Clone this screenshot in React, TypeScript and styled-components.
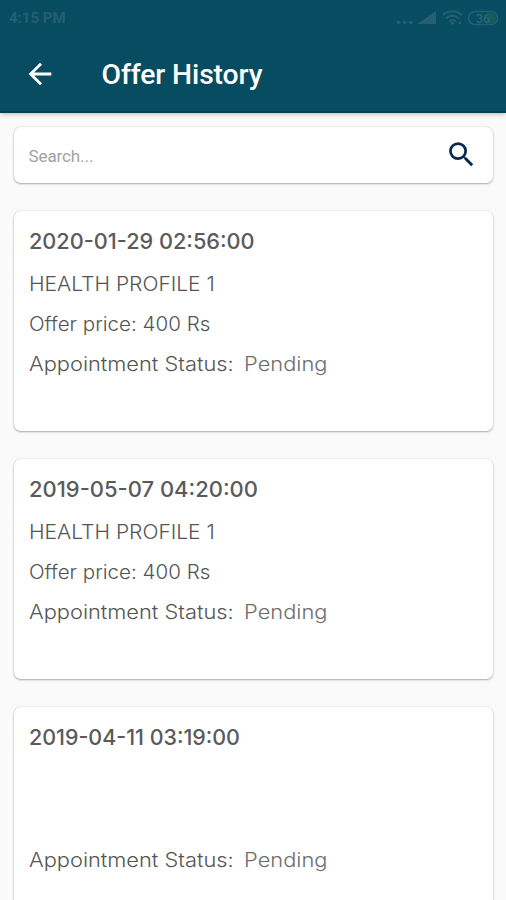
import React from 'react';
import styled, { createGlobalStyle } from 'styled-components';

const GlobalStyle = createGlobalStyle`
  * { box-sizing: border-box; }
  body { margin: 0; background: #fafafa; }
`;

const Screen = styled.div`
  height: 900px;
  overflow: hidden;
  display: flex;
  flex-direction: column;
  background: #fafafa;
  font-family: Roboto, sans-serif;
`;

const Header = styled.header`
  flex: none;
  height: 113px;
  background: #084c61;
  border-bottom: 2px solid #083a5a;
  box-shadow: 0 1px 5px rgba(60, 20, 20, 0.3);
`;

const StatusBar = styled.div`
  height: 36px;
  padding: 0 7px 0 9px;
  display: flex;
  align-items: center;
  justify-content: space-between;
  color: #245f72;
`;

const Clock = styled.span`
  font-size: 15px;
  font-weight: 700;
`;

const TitleBar = styled.div`
  height: 75px;
  padding-left: 23px;
  display: flex;
  align-items: center;
  gap: 44.5px;
`;

const IconButton = styled.button`
  flex: none;
  padding: 0;
  border: 0;
  background: none;
  display: flex;
`;

const Title = styled.h1`
  margin: 3px 0 0;
  font-size: 28.3px;
  line-height: 32px;
  font-weight: 500;
  letter-spacing: -0.12px;
  color: #fff;
`;

const Content = styled.main`
  padding: 14px 13px 0 14px;
  display: flex;
  flex-direction: column;
  gap: 28px;
`;

const Panel = styled.section`
  flex: none;
  background: #fff;
  border-radius: 7px;
  box-shadow: 0 1px 2px rgba(0, 0, 0, 0.3), 0 0 2px rgba(0, 0, 0, 0.14);
`;

const SearchPanel = styled(Panel)`
  height: 56px;
  padding: 0 15px 2px 14.5px;
  display: flex;
  align-items: center;
  justify-content: space-between;
`;

const SearchInput = styled.input`
  width: 300px;
  padding: 4px 0 0;
  border: 0;
  outline: 0;
  background: none;
  font: 400 17px Roboto, sans-serif;
  letter-spacing: -0.1px;
  &::placeholder { color: #a2a2a2; opacity: 1; }
`;

const Card = styled(Panel)`
  height: 220px;
  padding: 9.6px 15px 0 14.6px;
  font-family: Inter, sans-serif;
  color: #555;
`;

const DateLine = styled.h2<{ $stretch: number }>`
  margin: 0 0 3.4px;
  font-size: 21.8px;
  line-height: 40px;
  font-weight: 500;
  transform: scaleX(${(p) => p.$stretch});
  transform-origin: left;
  white-space: nowrap;
  color: #5a5a5a;
`;

const Line = styled.p<{ $stretch: number }>`
  margin: 0;
  height: 40.2px;
  font-size: 19.4px;
  line-height: 40.2px;
  font-weight: 300;
  transform: scaleX(${(p) => p.$stretch});
  transform-origin: left;
  white-space: nowrap;
`;

const Status = styled.span`
  margin-left: 9.3px;
  color: #6e6e6e;
`;

interface Offer {
  date: string;
  stretch: number;
  profile?: string;
  price?: string;
  status: string;
}

const offers: Offer[] = [
  { date: '2020-01-29 02:56:00', stretch: 0.995, profile: 'HEALTH PROFILE 1', price: 'Offer price: 400 Rs', status: 'Pending' },
  { date: '2019-05-07 04:20:00', stretch: 1.008, profile: 'HEALTH PROFILE 1', price: 'Offer price: 400 Rs', status: 'Pending' },
  { date: '2019-04-11 03:19:00', stretch: 0.983, status: 'Pending' },
];

const BackIcon = () => (
  <svg width="34" height="34" viewBox="0 0 24 24" fill="#fff">
    <path d="M20 11H7.83l5.59-5.59L12 4l-8 8 8 8 1.41-1.41L7.83 13H20v-2z" />
  </svg>
);

const SearchIcon = () => (
  <svg width="33" height="33" viewBox="0 0 24 24" fill="#07294f">
    <path d="M15.5 14h-.79l-.28-.27A6.47 6.47 0 0 0 16 9.5 6.5 6.5 0 1 0 9.5 16c1.61 0 3.09-.59 4.23-1.57l.27.28v.79l5 4.99L20.49 19l-4.99-5zm-6 0C7.01 14 5 11.99 5 9.5S7.01 5 9.5 5 14 7.01 14 9.5 11.99 14 9.5 14z" />
  </svg>
);

const SystemIcons = () => (
  <svg width="103" height="22" viewBox="0 0 103 22" fill="none">
    <g fill="#245f72">
      <circle cx="2.5" cy="15.5" r="1.8" />
      <circle cx="8.7" cy="15.5" r="1.8" />
      <circle cx="15" cy="15.5" r="1.8" />
      <path d="M21 17 40 4v13z" />
      <circle cx="56.3" cy="16" r="1.8" />
      <circle cx="64" cy="16" r="1.4" />
    </g>
    <g stroke="#245f72" strokeWidth="2">
      <path d="M47 8.2a13.5 13.5 0 0 1 19 0M50 11.5a9 9 0 0 1 12.8 0M53 14.4a5 5 0 0 1 6.8 0" />
      <rect x="72.5" y="4.5" width="29" height="13" rx="6.5" strokeWidth="1.5" />
    </g>
    <path d="M91 5.5h3.5a5.5 5.5 0 0 1 0 11H91z" fill="#145e58" />
    <text x="80" y="15.6" fill="#2a6678" fontFamily="Roboto, sans-serif" fontSize="12.5" fontWeight="500">36</text>
  </svg>
);

const OfferCard = ({ offer }: { offer: Offer }) => (
  <Card>
    <DateLine $stretch={offer.stretch}>{offer.date}</DateLine>
    <Line $stretch={1.084}>{offer.profile}</Line>
    <Line $stretch={1.061}>{offer.price}</Line>
    <Line $stretch={1.125}>
      Appointment Status:<Status>{offer.status}</Status>
    </Line>
  </Card>
);

export default function App() {
  return (
    <Screen>
      <GlobalStyle />
      <Header>
        <StatusBar>
          <Clock>4:15 PM</Clock>
          <SystemIcons />
        </StatusBar>
        <TitleBar>
          <IconButton aria-label="Back"><BackIcon /></IconButton>
          <Title>Offer History</Title>
        </TitleBar>
      </Header>
      <Content>
        <SearchPanel>
          <SearchInput placeholder="Search..." />
          <IconButton aria-label="Search"><SearchIcon /></IconButton>
        </SearchPanel>
        {offers.map((offer) => <OfferCard key={offer.date} offer={offer} />)}
      </Content>
    </Screen>
  );
}
